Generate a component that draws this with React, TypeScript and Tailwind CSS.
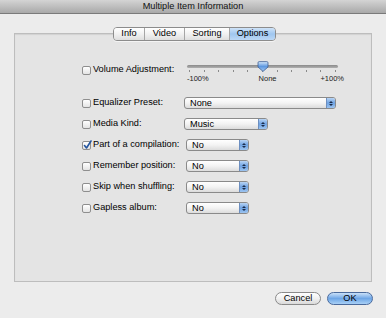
import React from 'react';

const font = { fontFamily: '"Liberation Sans", Arial, sans-serif' };

function Checkbox({ checked = false }: { checked?: boolean }) {
  return (
    <div className="relative w-[9px] h-[9px] shrink-0 rounded-[2px] border border-[#8e8e8e] bg-gradient-to-b from-[#ffffff] to-[#e4e4e4]">
      {checked && (
        <svg className="absolute -top-[2px] left-[0px]" width="9" height="10" viewBox="0 0 9 10">
          <path d="M1.5 5.5 L3.5 8 L8 1" fill="none" stroke="#24559f" strokeWidth="1.6" strokeLinecap="round" strokeLinejoin="round" />
        </svg>
      )}
    </div>
  );
}

function Popup({ value, width }: { value: string; width: string }) {
  return (
    <div className={`${width} h-[12px] flex rounded-[3px] border border-[#8a8a8a] bg-gradient-to-b from-[#ffffff] via-[#f3f3f3] to-[#dcdcdc] overflow-hidden`}>
      <span className="flex-1 pl-[5px] text-[9.2px] leading-[11px] text-[#000]">{value}</span>
      <div className="w-[9px] flex flex-col items-center justify-center gap-[1px] border-l border-[#6d8fc0] bg-gradient-to-b from-[#b8d4f4] via-[#6ea2e2] to-[#9cc4f0]">
        <div className="w-0 h-0 border-x-[2px] border-x-transparent border-b-[2px] border-b-[#1b2c4a]" />
        <div className="w-0 h-0 border-x-[2px] border-x-transparent border-t-[2px] border-t-[#1b2c4a]" />
      </div>
    </div>
  );
}

function Row({ label, checked, children }: { label: string; checked?: boolean; children: React.ReactNode }) {
  return (
    <div className="flex items-center h-[12px]">
      <div className="w-[102px] flex items-center gap-[2px]">
        <Checkbox checked={checked} />
        <span className="text-[9.2px] text-[#000] whitespace-nowrap">{label}</span>
      </div>
      {children}
    </div>
  );
}

const tabs = [
  { name: 'Info', w: 'w-[30px]' },
  { name: 'Video', w: 'w-[40px]' },
  { name: 'Sorting', w: 'w-[45px]' },
  { name: 'Options', w: 'w-[46px]' },
];

export default function App() {
  return (
    <div className="w-[386px] h-[318px] bg-[#ececec] flex flex-col overflow-hidden" style={font}>
      {/* title bar */}
      <div className="h-[14px] shrink-0 flex items-center justify-center bg-gradient-to-b from-[#d4d4d4] to-[#a9a9a9] border-b border-[#7a7a7a]">
        <span className="text-[9.2px] text-[#111]">Multiple Item Information</span>
      </div>

      {/* tabs */}
      <div className="mt-[13px] flex justify-start pl-[113px] relative z-10">
        <div className="flex h-[14px] rounded-[4px] border border-[#8c8c8c] overflow-hidden shadow-[0_1px_0_rgba(255,255,255,0.6)]">
          {tabs.map((t, i) => (
            <div
              key={t.name}
              className={`${t.w} flex items-center justify-center text-[9.2px] text-[#000] ${i > 0 ? 'border-l border-[#a5a5a5]' : ''} ${
                t.name === 'Options'
                  ? 'bg-gradient-to-b from-[#cfe3f8] via-[#9fc6ef] to-[#bcd8f6]'
                  : 'bg-gradient-to-b from-[#ffffff] via-[#f1f1f1] to-[#dedede]'
              }`}
            >
              {t.name}
            </div>
          ))}
        </div>
      </div>

      {/* panel */}
      <div className="ml-[14px] -mt-[8px] w-[358px] h-[249px] border border-[#bdbdbd] bg-[#e4e4e4] shadow-[inset_0_1px_1px_rgba(0,0,0,0.08)] pl-[67px] pt-[27px] flex flex-col">
        {/* volume */}
        <div className="flex items-start">
          <div className="w-[102px] mt-[3px] h-[12px] flex items-center gap-[2px]">
            <Checkbox />
            <span className="text-[9.2px] text-[#000] whitespace-nowrap">Volume Adjustment:</span>
          </div>
          <div className="ml-[3px] w-[151px] flex flex-col">
            <div className="relative h-[12px]">
              <div className="absolute top-[4px] left-0 right-0 h-[3px] rounded-full bg-gradient-to-b from-[#8a8a8a] to-[#b0b0b0]" />
              <div className="absolute top-[9px] left-[2px] right-[2px] flex justify-between">
                {Array.from({ length: 11 }).map((_, i) => (
                  <div key={i} className="w-px h-[2px] bg-[#8a8a8a]" />
                ))}
              </div>
              <svg className="absolute top-[0px] left-[70px]" width="12" height="11" viewBox="0 0 12 11">
                <defs>
                  <linearGradient id="th" x1="0" y1="0" x2="0" y2="1">
                    <stop offset="0" stopColor="#d6e8fb" />
                    <stop offset="0.5" stopColor="#5e98e0" />
                    <stop offset="1" stopColor="#a3c9f3" />
                  </linearGradient>
                </defs>
                <path d="M1 1.8 Q1 0.6 2.2 0.6 H9.8 Q11 0.6 11 1.8 V6 L6 10.4 L1 6 Z" fill="url(#th)" stroke="#3f5f94" strokeWidth="0.8" />
              </svg>
            </div>
            <div className="flex justify-between text-[7.5px] leading-[10px] text-[#222] mt-[1px] -mr-[6px]">
              <span>-100%</span>
              <span className="pl-[6px]">None</span>
              <span>+100%</span>
            </div>
          </div>
        </div>

        <div className="mt-[13px]">
          <Row label="Equalizer Preset:">
            <Popup value="None" width="w-[152px]" />
          </Row>
        </div>
        <div className="mt-[9px] flex flex-col gap-[9px]">
          <Row label="Media Kind:">
            <Popup value="Music" width="w-[84px]" />
          </Row>
          <Row label="Part of a compilation:" checked>
            <div className="ml-[2px]">
              <Popup value="No" width="w-[63px]" />
            </div>
          </Row>
          <Row label="Remember position:">
            <div className="ml-[2px]">
              <Popup value="No" width="w-[63px]" />
            </div>
          </Row>
          <Row label="Skip when shuffling:">
            <div className="ml-[2px]">
              <Popup value="No" width="w-[63px]" />
            </div>
          </Row>
          <Row label="Gapless album:">
            <div className="ml-[2px]">
              <Popup value="No" width="w-[63px]" />
            </div>
          </Row>
        </div>
      </div>

      {/* buttons */}
      <div className="mt-[10px] flex justify-end gap-[6px] pr-[13px]">
        <div className="w-[46px] h-[13px] rounded-full border border-[#8a8a8a] bg-gradient-to-b from-[#ffffff] via-[#f0f0f0] to-[#dadada] flex items-center justify-center text-[9.2px] text-[#000]">
          Cancel
        </div>
        <div className="w-[46px] h-[13px] rounded-full border border-[#4a6a9c] bg-gradient-to-b from-[#c9e0f8] via-[#6ea6e6] to-[#a8d0f6] flex items-center justify-center text-[9.2px] text-[#000]">
          OK
        </div>
      </div>
    </div>
  );
}
